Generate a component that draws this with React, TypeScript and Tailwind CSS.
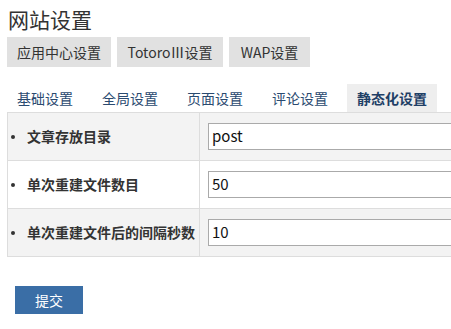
import React from "react";

const font = { fontFamily: '"Noto Sans CJK SC", "Noto Sans", sans-serif' };

export default function App() {
  const rows = [
    { label: "文章存放目录", value: "post", bg: "bg-[#f3f3f3]" },
    { label: "单次重建文件数目", value: "50", bg: "bg-white" },
    { label: "单次重建文件后的间隔秒数", value: "10", bg: "bg-[#f3f3f3]" },
  ];
  const tabs = ["基础设置", "全局设置", "页面设置", "评论设置", "静态化设置"];
  return (
    <div className="w-[451px] h-[329px] overflow-hidden bg-white" style={font}>
      <div className="pl-[7px] pt-[5px]">
        <h1 className="text-[21px] leading-[28px] text-[#333] pl-[1px]">网站设置</h1>
        <div className="flex gap-[6px] mt-[4px]">
          <div className="h-[30px] w-[104px] bg-[#e1e1e1] text-[#333] text-[14px] flex items-center justify-center">应用中心设置</div>
          <div className="h-[30px] w-[106px] bg-[#e1e1e1] text-[#333] text-[14px] flex items-center justify-center">TotoroⅢ设置</div>
          <div className="h-[30px] w-[81px] bg-[#e1e1e1] text-[#333] text-[14px] flex items-center justify-center">WAP设置</div>
        </div>
        <div className="flex mt-[17px] h-[28px] items-stretch">
          {tabs.map((t, i) => (
            <div
              key={t}
              className={
                i === tabs.length - 1
                  ? "bg-[#eeeeee] text-[#1f3f66] font-bold text-[14px] flex items-center px-[10px] whitespace-nowrap"
                  : "text-[#2a4a70] text-[14px] flex items-center pl-[10px] pr-[19px] whitespace-nowrap"
              }
            >
              {t}
            </div>
          ))}
        </div>
        <div className="w-[470px] border-t border-l border-[#dddddd]">
          {rows.map((r) => (
            <div key={r.label} className={"flex h-[48px] border-b border-[#dddddd] " + r.bg}>
              <div className="w-[192px] shrink-0 border-r border-[#dddddd] flex items-center pl-[3px] text-[14px] font-bold text-[#333] whitespace-nowrap">
                <span className="w-[4px] h-[4px] rounded-full bg-[#333] mr-[12px]"></span>
                {r.label}
              </div>
              <div className="flex items-center pl-[8px]">
                <div className="w-[300px] h-[27px] border border-[#aaaaaa] bg-white flex items-center pl-[3px] text-[15px] text-[#111]">
                  {r.value}
                </div>
              </div>
            </div>
          ))}
        </div>
        <div className="mt-[29px] ml-[8px] w-[68px] h-[28px] bg-[#3a6ea6] text-white text-[14px] flex items-center justify-center">
          提交
        </div>
      </div>
    </div>
  );
}
